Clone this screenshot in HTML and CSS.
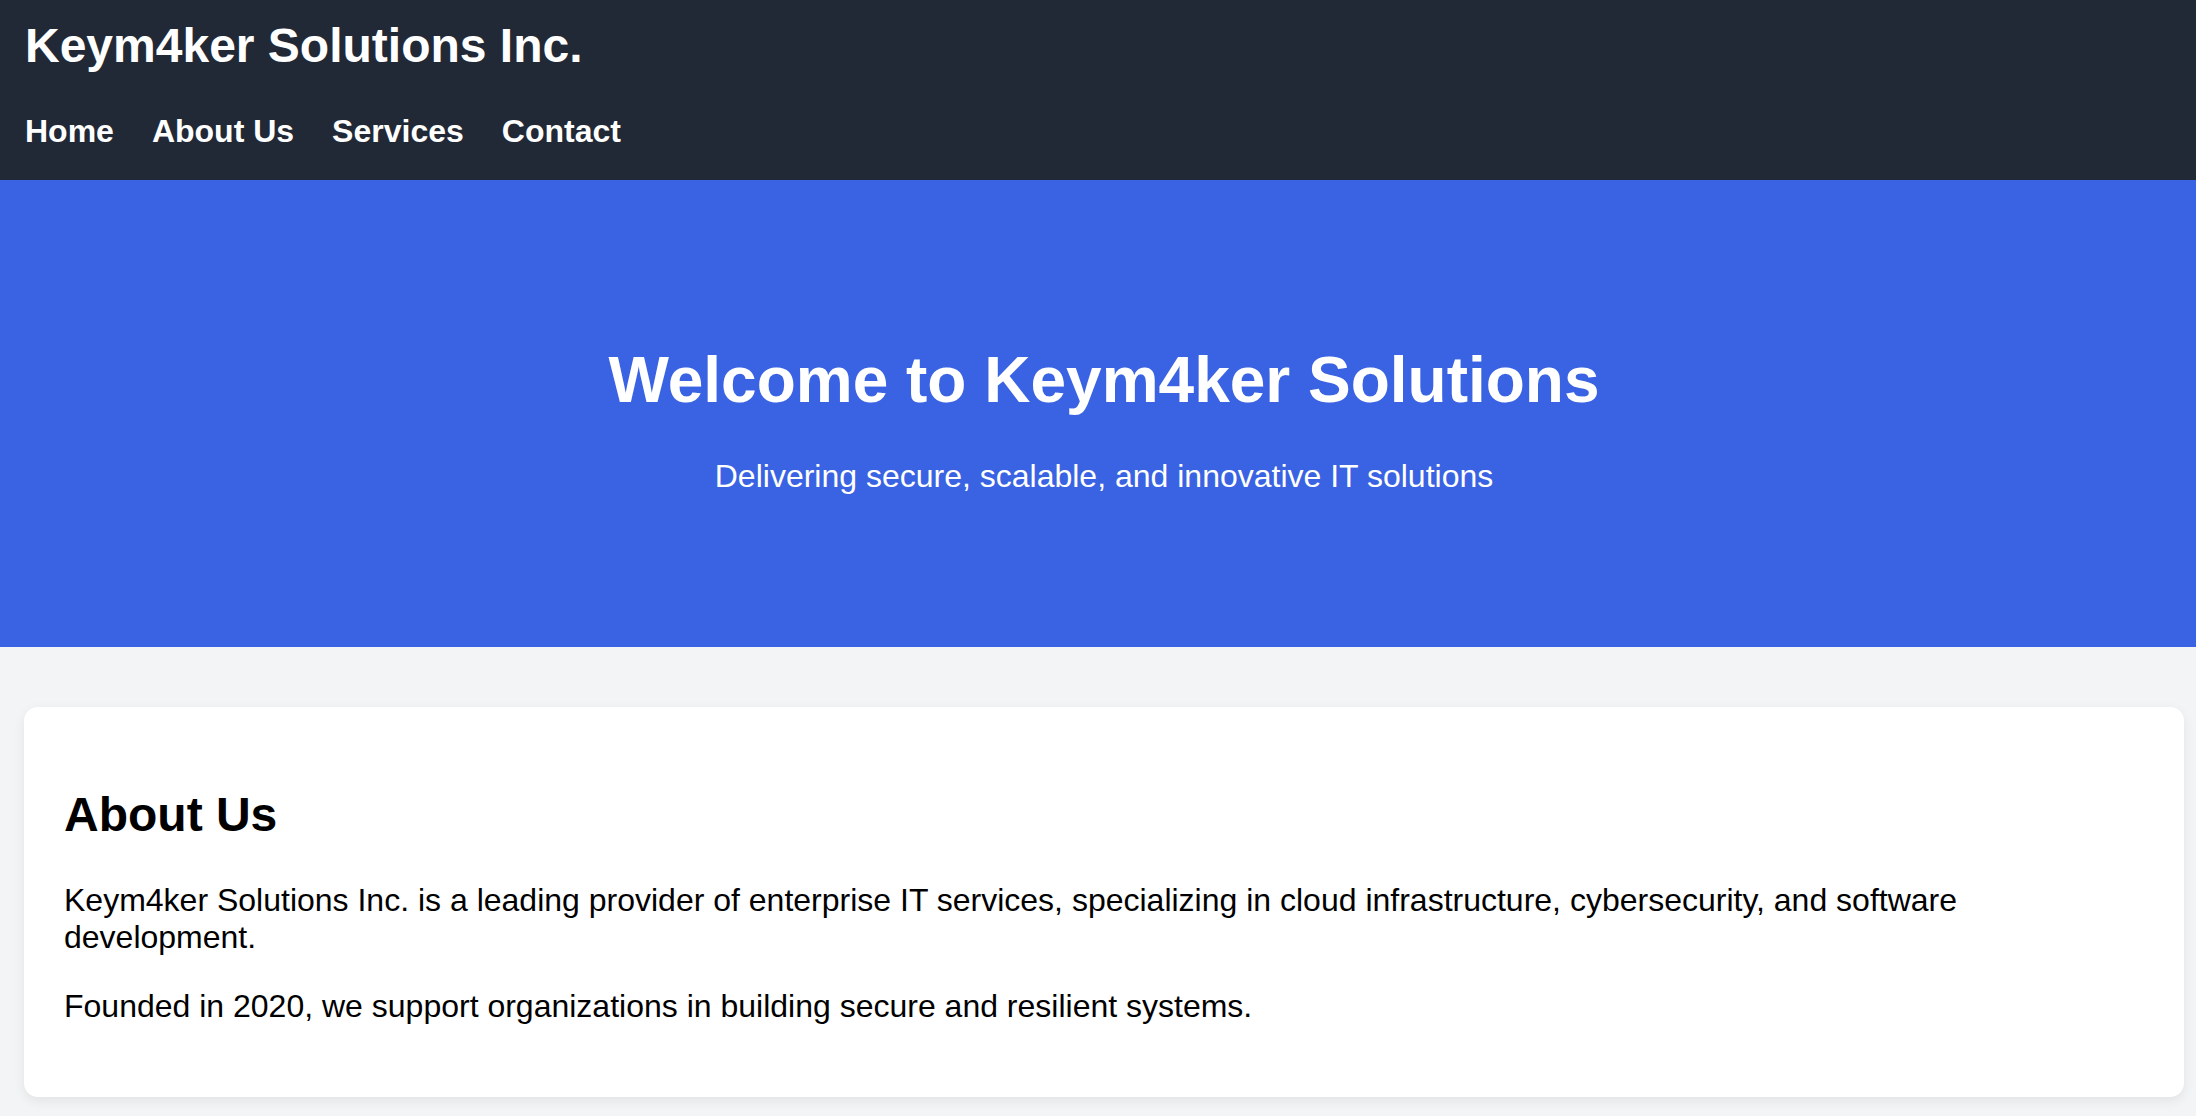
FILE: index.html
```html
<!DOCTYPE html>
<html lang="en">
<head>
  <meta charset="UTF-8" />
  <meta name="viewport" content="width=device-width, initial-scale=1.0" />
  <title>Keym4ker Solutions Inc.</title>
  <link rel="stylesheet" href="styles.css">
</head>
<body>
  <header class="site-header">
    <h1 class="logo">Keym4ker Solutions Inc.</h1>
    <nav>
      <ul class="nav-links">
        <li><a href="#home">Home</a></li>
        <li><a href="#about">About Us</a></li>
        <li><a href="#services">Services</a></li>
        <li><a href="#contact">Contact</a></li>
      </ul>
    </nav>
  </header>

  <section id="home" class="hero">
    <h1 class="hero-title">Welcome to Keym4ker Solutions</h1>
    <p class="hero-text">Delivering secure, scalable, and innovative IT solutions</p>
  </section>

  <main class="content">
    <section id="about" class="card">
      <h2 class="card-title">About Us</h2>
      <p>Keym4ker Solutions Inc. is a leading provider of enterprise IT services, specializing in cloud infrastructure, cybersecurity, and software development.</p>
      <p>Founded in 2020, we support organizations in building secure and resilient systems.</p>
    </section>
  </main>
</body>
</html>
```

FILE: styles.css
```css
* {
  margin: 0;
  padding: 0;
  box-sizing: border-box;
}
body {
  font-family: 'Liberation Sans', Arial, sans-serif;
  font-size: 32px;
  background: #f3f4f6;
  color: #000;
}
.site-header {
  background: #222936;
  color: #fff;
  padding: 18px 22px 30px 25px;
}
.logo {
  font-size: 48px;
  font-weight: 700;
  margin-bottom: 40px;
}
.nav-links {
  list-style: none;
  display: flex;
  gap: 38px;
}
.nav-links a {
  color: #fff;
  text-decoration: none;
  font-weight: 700;
  font-size: 32px;
}
.hero {
  background: #3a63e3;
  color: #fff;
  text-align: center;
  padding: 120px 0 120px 12px;
}
.hero-title {
  font-size: 64px;
  font-weight: 700;
  margin: 43px 0 41px;
}
.hero-text {
  font-size: 32px;
  margin-bottom: 32px;
}
.content {
  padding: 60px 12px 40px 24px;
}
.card {
  background: #fff;
  border-radius: 14px;
  padding: 40px;
  box-shadow: 0 4px 12px rgba(0, 0, 0, 0.07);
}
.card-title {
  font-size: 48px;
  font-weight: 700;
  margin: 40px 0;
}
.card p {
  margin: 32px 0;
}
```
